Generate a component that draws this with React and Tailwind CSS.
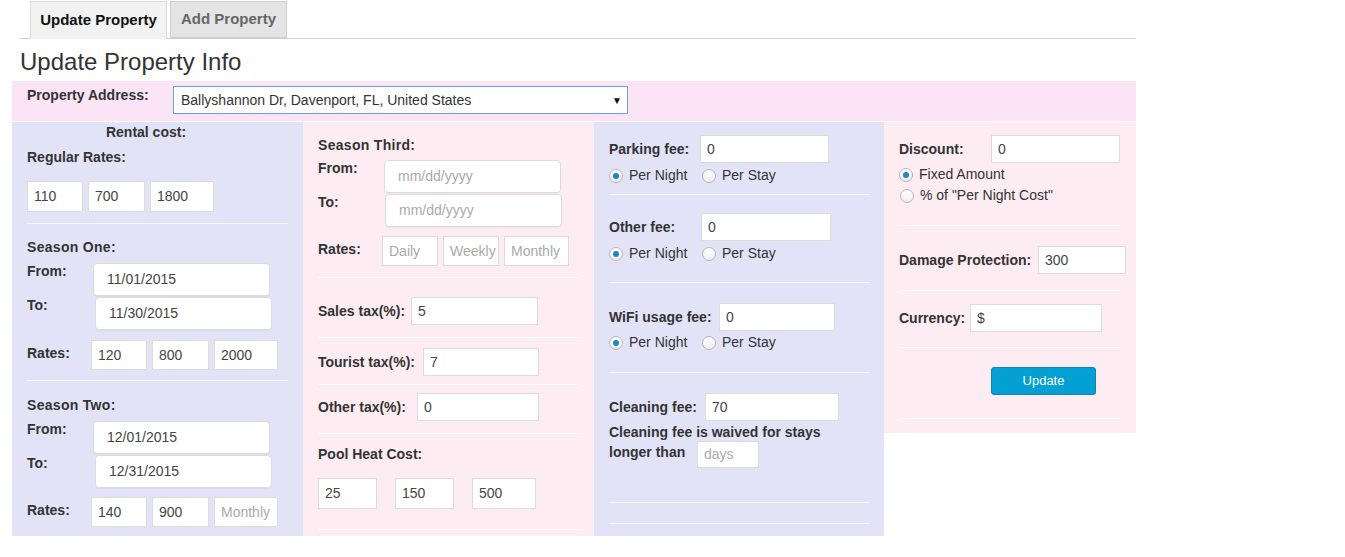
import React from 'react';

const Sep = ({ className = '' }) => <div className={`h-px bg-white/70 ${className}`} />;

const Box = ({ value, placeholder, className = '', round = false }) => (
  <div
    className={`shrink-0 bg-white border border-[#dcdcdc] flex items-center px-[6px] text-[14px] whitespace-nowrap overflow-hidden ${
      value ? 'text-[#444]' : 'text-[#aaa]'
    } ${round ? 'rounded-[4px] pl-[13px]' : ''} ${className}`}
  >
    {value || placeholder}
  </div>
);

const Radio = ({ checked, label, className = '' }) => (
  <div className={`flex items-center h-[21px] whitespace-nowrap ${className}`}>
    <span className="w-[14px] h-[14px] rounded-full border border-[#b5b5b5] bg-gradient-to-b from-white to-[#eee] flex items-center justify-center">
      {checked && <span className="w-[6px] h-[6px] rounded-full bg-[#1a86c4]" />}
    </span>
    <span className="ml-[6px] text-[#333]">{label}</span>
  </div>
);

const DateRow = ({ label, value, placeholder, labelW, className = '' }) => (
  <div className={`flex items-start ${className}`}>
    <div className="font-bold leading-5 shrink-0" style={{ width: labelW }}>{label}</div>
    <Box round value={value} placeholder={placeholder} className="w-[177px] h-[33px] mt-[2px] shadow-[0_1px_1px_rgba(0,0,0,0.04)]" />
  </div>
);

const RatesRow = ({ vals, ph = ['Daily', 'Weekly', 'Monthly'], wide = false, className = '' }) => (
  <div className={`flex items-start ${className}`}>
    <div className="font-bold leading-5 mt-[3px] w-[64px] shrink-0">Rates:</div>
    <div className="flex gap-[5px]">
      <Box value={vals[0]} placeholder={ph[0]} className="w-[56px] h-[30px]" />
      <Box value={vals[1]} placeholder={ph[1]} className={wide ? 'w-[56px] h-[30px] px-[4px]' : 'w-[57px] h-[30px]'} />
      <Box value={vals[2]} placeholder={ph[2]} className={wide ? 'w-[65px] h-[30px] px-[5px]' : 'w-[64px] h-[30px] px-[5px]'} />
    </div>
  </div>
);

const Label = ({ children, className = '' }) => (
  <span className={`font-bold whitespace-nowrap shrink-0 ${className}`}>{children}</span>
);

export default function App() {
  return (
    <div className="w-[1345px] h-[557px] bg-white text-[14px] text-[#333] overflow-hidden" style={{ fontFamily: '"Liberation Sans", Arial, sans-serif' }}>
      {/* tabs */}
      <div className="ml-[20px] w-[1116px] border-b border-[#cfcfcf] flex pl-[10px] pt-[1px] h-[39px]">
        <div className="h-[38px] w-[137px] bg-[#f2f2f2] border border-b-0 border-[#dadada] flex items-center justify-center font-bold text-[15px] text-[#111]">Update Property</div>
        <div className="ml-[3px] h-[37px] w-[117px] bg-[#e4e4e4] border border-[#cfcfcf] flex items-center justify-center font-bold text-[15px] text-[#666]">Add Property</div>
      </div>
      <h1 className="ml-[20px] mt-[8px] text-[24px] leading-[30px] text-[#333]">Update Property Info</h1>

      <div className="ml-[12px] w-[1124px] mt-[4px]">
        {/* address */}
        <div className="h-[40px] bg-[#fbe4f5] flex items-start pl-[15px] pt-[5px]">
          <span className="font-bold mt-[-1px] w-[146px] leading-5">Property Address:</span>
          <div className="w-[455px] h-[28px] bg-white border border-[#6aa3e0] flex items-center justify-between pl-[7px] pr-[5px] text-[#333]">
            <span>Ballyshannon Dr, Davenport, FL, United States</span>
            <span className="text-[10px] text-[#111]">▼</span>
          </div>
        </div>
        <div className="h-px bg-white" />

        <div className="flex items-start">
          {/* col 1 */}
          <div className="w-[291px] h-[414px] bg-[#e3e3f8] px-[15px]">
            <div className="font-bold text-center leading-5 w-[238px]">Rental cost:</div>
            <div className="font-bold leading-5 mt-[5px]">Regular Rates:</div>
            <div className="flex gap-[5px] mt-[14px]">
              <Box value="110" className="w-[56px] h-[31px]" />
              <Box value="700" className="w-[57px] h-[31px]" />
              <Box value="1800" className="w-[64px] h-[31px]" />
            </div>
            <Sep className="mt-[11px]" />
            <div className="font-bold leading-5 mt-[13px] tracking-[0.3px]">Season One:</div>
            <DateRow label="From:" value="11/01/2015" labelW={66} className="mt-[4px]" />
            <DateRow label="To:" value="11/30/2015" labelW={68} className="-mt-[1px]" />
            <RatesRow vals={['120', '800', '2000']} className="mt-[10px]" />
            <Sep className="mt-[10px]" />
            <div className="font-bold leading-5 mt-[14px] tracking-[0.3px]">Season Two:</div>
            <DateRow label="From:" value="12/01/2015" labelW={66} className="mt-[4px]" />
            <DateRow label="To:" value="12/31/2015" labelW={68} className="-mt-[1px]" />
            <RatesRow vals={['140', '900', '']} className="mt-[9px]" />
          </div>

          {/* col 2 */}
          <div className="w-[291px] h-[414px] bg-[#fdedf2] px-[15px]">
            <div className="font-bold leading-5 mt-[13px] tracking-[0.3px]">Season Third:</div>
            <DateRow label="From:" placeholder="mm/dd/yyyy" labelW={66} className="mt-[3px]" />
            <DateRow label="To:" placeholder="mm/dd/yyyy" labelW={67} className="-mt-[1px]" />
            <RatesRow vals={['', '', '']} wide className="mt-[9px]" />
            <Sep className="mt-[11px]" />
            <div className="flex items-center mt-[19px]">
              <Label className="w-[93px]">Sales tax(%):</Label>
              <Box value="5" className="w-[127px] h-[28px]" />
            </div>
            <Sep className="mt-[12px]" />
            <div className="flex items-center mt-[10px]">
              <Label className="w-[105px]">Tourist tax(%):</Label>
              <Box value="7" className="w-[116px] h-[28px]" />
            </div>
            <Sep className="mt-[8px]" />
            <div className="flex items-center mt-[8px]">
              <Label className="w-[99px]">Other tax(%):</Label>
              <Box value="0" className="w-[122px] h-[28px]" />
            </div>
            <Sep className="mt-[12px]" />
            <div className="font-bold leading-5 mt-[10px]">Pool Heat Cost:</div>
            <div className="flex gap-[18px] mt-[14px]">
              <Box value="25" className="w-[59px] h-[31px]" />
              <Box value="150" className="w-[59px] h-[31px]" />
              <Box value="500" className="w-[64px] h-[31px]" />
            </div>
            <Sep className="mt-[20px]" />
          </div>

          {/* col 3 */}
          <div className="w-[290px] h-[414px] bg-[#e3e3f8] px-[15px]">
            <div className="flex items-center mt-[13px]">
              <Label className="w-[91px]">Parking fee:</Label>
              <Box value="0" className="w-[129px] h-[28px]" />
            </div>
            <div className="flex mt-[2px]">
              <Radio checked label="Per Night" className="w-[93px]" />
              <Radio label="Per Stay" />
            </div>
            <Sep className="mt-[8px]" />
            <div className="flex items-center mt-[18px]">
              <Label className="w-[92px]">Other fee:</Label>
              <Box value="0" className="w-[130px] h-[28px]" />
            </div>
            <div className="flex mt-[2px]">
              <Radio checked label="Per Night" className="w-[93px]" />
              <Radio label="Per Stay" />
            </div>
            <Sep className="mt-[18px]" />
            <div className="flex items-center mt-[20px]">
              <Label className="w-[110px]">WiFi usage fee:</Label>
              <Box value="0" className="w-[116px] h-[28px]" />
            </div>
            <div className="flex mt-[1px]">
              <Radio checked label="Per Night" className="w-[93px]" />
              <Radio label="Per Stay" />
            </div>
            <Sep className="mt-[19px]" />
            <div className="flex items-center mt-[20px]">
              <Label className="w-[96px]">Cleaning fee:</Label>
              <Box value="70" className="w-[134px] h-[28px]" />
            </div>
            <div className="font-bold leading-5 mt-[1px] whitespace-nowrap">Cleaning fee is waived for stays</div>
            <div className="flex items-start">
              <Label className="w-[88px] leading-5">longer than</Label>
              <Box placeholder="days" className="-mt-[1px] w-[62px] h-[27px]" />
            </div>
            <Sep className="mt-[34px]" />
            <Sep className="mt-[20px]" />
          </div>

          {/* col 4 */}
          <div className="w-[252px] h-[311px] bg-[#fdedf2] px-[15px]">
            <div className="flex items-center mt-[13px]">
              <Label className="w-[92px]">Discount:</Label>
              <Box value="0" className="w-[129px] h-[28px]" />
            </div>
            <Radio checked label="Fixed Amount" className="mt-[1px]" />
            <Radio label={'% of "Per Night Cost"'} className="ml-[1px]" />
            <Sep className="mt-[19px]" />
            <div className="flex items-center mt-[20px]">
              <Label className="w-[139px]">Damage Protection:</Label>
              <Box value="300" className="w-[88px] h-[28px]" />
            </div>
            <Sep className="mt-[16px]" />
            <div className="flex items-center mt-[13px]">
              <Label className="w-[71px]">Currency:</Label>
              <Box value="$" className="w-[132px] h-[28px]" />
            </div>
            <Sep className="mt-[15px]" />
            <button className="block mt-[19px] ml-[92px] w-[105px] h-[28px] rounded-[3px] bg-[#03a0d3] border border-[#0a86b8] text-white text-[13px]">Update</button>
            <Sep className="mt-[23px]" />
          </div>
        </div>
      </div>
    </div>
  );
}
